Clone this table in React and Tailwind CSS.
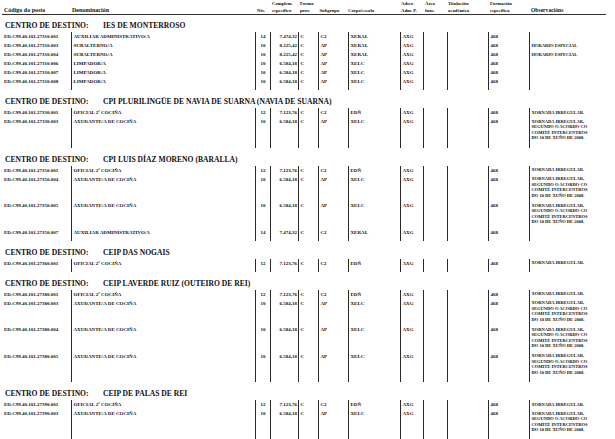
import React from "react";

const OBS4 = [
  "XORNADA IRREGULAR,",
  "SEGUNDO O ACORDO CO",
  "COMITÉ INTERCENTROS",
  "DO 10 DE XUÑO DE 2008.",
];

const aux = (code) => ({ code, den: "AUXILIAR ADMINISTRATIVO/A", niv: "14", comp: "7.474,32", sub: "C2", corpo: "XERAL", obs: [] });
const sub = (code) => ({ code, den: "SUBALTERNO/A", niv: "10", comp: "8.225,42", sub: "AP", corpo: "XERAL", obs: ["HORARIO ESPECIAL"] });
const lim = (code) => ({ code, den: "LIMPADOR/A", niv: "10", comp: "6.584,18", sub: "AP", corpo: "XELC", obs: [] });
const ofi = (code) => ({ code, den: "OFICIAL 2ª COCIÑA", niv: "12", comp: "7.123,76", sub: "C2", corpo: "EDÑ", obs: ["XORNADA IRREGULAR."] });
const axu = (code) => ({ code, den: "AXUDANTE/A DE COCIÑA", niv: "10", comp: "6.584,18", sub: "AP", corpo: "XELC", obs: OBS4, tall: true });

const P = "ED.C99.40.101.";

const GROUPS = [
  {
    name: "IES DE MONTERROSO",
    rows: [aux(P + "27310.001"), sub(P + "27310.003"), sub(P + "27310.004"), lim(P + "27310.006"), lim(P + "27310.007"), lim(P + "27310.008")],
  },
  {
    name: "CPI PLURILINGÜE DE NAVIA DE SUARNA (NAVIA DE SUARNA)",
    rows: [ofi(P + "27330.001"), axu(P + "27330.003")],
  },
  {
    name: "CPI LUIS DÍAZ MORENO (BARALLA)",
    rows: [ofi(P + "27350.001"), axu(P + "27350.004"), axu(P + "27350.005"), aux(P + "27350.007")],
  },
  {
    name: "CEIP DAS NOGAIS",
    rows: [ofi(P + "27360.001")],
  },
  {
    name: "CEIP LAVERDE RUIZ (OUTEIRO DE REI)",
    rows: [ofi(P + "27380.001"), axu(P + "27380.003"), axu(P + "27380.004"), axu(P + "27380.005")],
  },
  {
    name: "CEIP DE PALAS DE REI",
    rows: [ofi(P + "27390.001"), axu(P + "27390.003")],
  },
];

const B = "border-l border-[#2a2a2a]";

function Cells({ r, h }) {
  return (
    <div className={`flex ${h} text-[5px] leading-[5px] font-bold text-[#111] whitespace-nowrap`}>
      <div className="w-[71px] shrink-0 pl-[4px] pt-[2px]">{r && r.code}</div>
      <div className={`w-[184px] shrink-0 ${B} pl-[1.5px] pt-[2px]`}>{r && r.den}</div>
      <div className={`w-[15px] shrink-0 ${B} pt-[2px] text-center`}>{r && r.niv}</div>
      <div className={`w-[28px] shrink-0 ${B} pt-[2px] pr-[1px] text-right`}>{r && r.comp}</div>
      <div className={`w-[20px] shrink-0 ${B} pt-[2px] pl-[1.5px]`}>{r && "C"}</div>
      <div className={`w-[30px] shrink-0 ${B} pt-[2px] pl-[1.5px]`}>{r && r.sub}</div>
      <div className={`w-[52px] shrink-0 ${B} pt-[2px] pl-[1.5px]`}>{r && r.corpo}</div>
      <div className={`w-[23px] shrink-0 ${B} pt-[2px] pl-[1.5px]`}>{r && "AXG"}</div>
      <div className={`w-[24px] shrink-0 ${B}`}></div>
      <div className={`w-[41px] shrink-0 ${B}`}></div>
      <div className={`w-[41px] shrink-0 ${B} pt-[2px] pl-[1.5px]`}>{r && "468"}</div>
      <div className={`w-[86px] shrink-0 ${B} pt-[1.8px] pl-[1.5px] text-[4.5px] leading-[5.4px]`}>
        {r && r.obs.map((l, i) => (
          <div key={i}>{l}</div>
        ))}
      </div>
    </div>
  );
}

function Group({ g }) {
  return (
    <div className="flex flex-col">
      <div className="mt-[6px] h-[10px] flex items-center text-[7.6px] leading-[10px] font-bold text-[#111] whitespace-nowrap">
        <span className="w-[103px] shrink-0 pl-[5px]">CENTRO DE DESTINO:</span>
        <span>{g.name}</span>
      </div>
      <div className="mt-[1px] flex flex-col">
        {g.rows.map((r, i) => (
          <Cells key={i} r={r} h={r.tall ? "h-[26.5px]" : "h-[9px]"} />
        ))}
        <Cells r={null} h="h-[4px]" />
      </div>
      <div className="h-[1px]"></div>
    </div>
  );
}

function HeadCell({ w, pl, a, b, size }) {
  return (
    <div className={`${w} ${pl} shrink-0 flex flex-col ${size}`}>
      <div className="h-[7px] leading-[7px]">{a}</div>
      <div className="h-[7px] leading-[7px]">{b}</div>
    </div>
  );
}

export default function App() {
  const S = "text-[4.7px]";
  return (
    <div className="w-[615px] h-[439px] overflow-hidden bg-white font-['Liberation_Serif','Times_New_Roman',serif]">
      <div className="flex h-[14px] font-bold text-[#111] whitespace-nowrap">
        <HeadCell w="w-[71px]" pl="pl-[4px]" a="" b="Código do posto" size="text-[6px]" />
        <HeadCell w="w-[184px]" pl="pl-[1px]" a="" b="Denominación" size="text-[6px]" />
        <HeadCell w="w-[15px]" pl="pl-[2px]" a="" b="Niv." size={S} />
        <HeadCell w="w-[28px]" pl="pl-[2px]" a="Complem." b="específico" size={S} />
        <HeadCell w="w-[20px]" pl="pl-[2px]" a="Forma" b="prov." size={S} />
        <HeadCell w="w-[30px]" pl="pl-[1.5px]" a="" b="Subgrupo" size={S} />
        <HeadCell w="w-[52px]" pl="pl-[0px]" a="" b="Corpo/escala" size={S} />
        <HeadCell w="w-[23px]" pl="pl-[1px]" a="Adscr." b="Adm. P." size={S} />
        <HeadCell w="w-[24px]" pl="pl-[2px]" a="Área" b="func." size={S} />
        <HeadCell w="w-[41px]" pl="pl-[1px]" a="Titulación" b="académica" size={S} />
        <HeadCell w="w-[41px]" pl="pl-[2px]" a="Formación" b="específica" size={S} />
        <HeadCell w="w-[86px]" pl="pl-[2px]" a="" b="Observacións" size="text-[5.6px]" />
      </div>
      <div className="ml-[2px] w-[604px] h-[1px] bg-[#333]"></div>
      {GROUPS.map((g, i) => (
        <Group key={i} g={g} />
      ))}
    </div>
  );
}
